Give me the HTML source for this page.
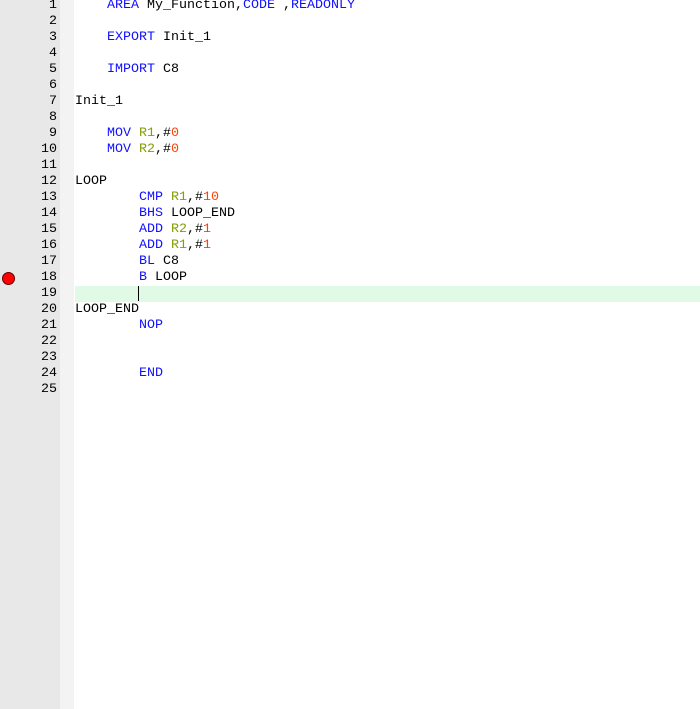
<!DOCTYPE html>
<html><head><meta charset="utf-8"><style>
html,body{margin:0;padding:0;width:700px;height:709px;overflow:hidden;background:#fff;}
.g{position:absolute;left:0;top:0;width:60px;height:709px;background:#e8e8e8;}
.s{position:absolute;left:60px;top:0;width:14px;height:709px;background:#f3f3f3;}
.hl{position:absolute;left:75px;top:286px;width:625px;height:16px;background:#e0fae6;}
.cur{position:absolute;left:138px;top:286px;width:1px;height:15px;background:#000;}
.bp{position:absolute;left:2px;top:272px;width:11px;height:11px;border-radius:50%;background:#f00;border:1px solid #600;}
pre{position:absolute;margin:0;top:-2px;font:13.33px/16px "Liberation Mono",monospace;color:#000;}
.n{left:0;width:57px;text-align:right;}
.c{left:75px;}
.k{color:#1010ff}.r{color:#80a000}.d{color:#ff4000}
</style></head><body>
<div class="g"></div><div class="s"></div><div class="hl"></div><div class="cur"></div><div class="bp"></div>
<pre class="n">1
2
3
4
5
6
7
8
9
10
11
12
13
14
15
16
17
18
19
20
21
22
23
24
25</pre>
<pre class="c">    <span class="k">AREA</span> My_Function,<span class="k">CODE</span> ,<span class="k">READONLY</span>

    <span class="k">EXPORT</span> Init_1

    <span class="k">IMPORT</span> C8

Init_1

    <span class="k">MOV</span> <span class="r">R1</span>,#<span class="d">0</span>
    <span class="k">MOV</span> <span class="r">R2</span>,#<span class="d">0</span>

LOOP
        <span class="k">CMP</span> <span class="r">R1</span>,#<span class="d">10</span>
        <span class="k">BHS</span> LOOP_END
        <span class="k">ADD</span> <span class="r">R2</span>,#<span class="d">1</span>
        <span class="k">ADD</span> <span class="r">R1</span>,#<span class="d">1</span>
        <span class="k">BL</span> C8
        <span class="k">B</span> LOOP

LOOP_END
        <span class="k">NOP</span>


        <span class="k">END</span>
</pre>
</body></html>
